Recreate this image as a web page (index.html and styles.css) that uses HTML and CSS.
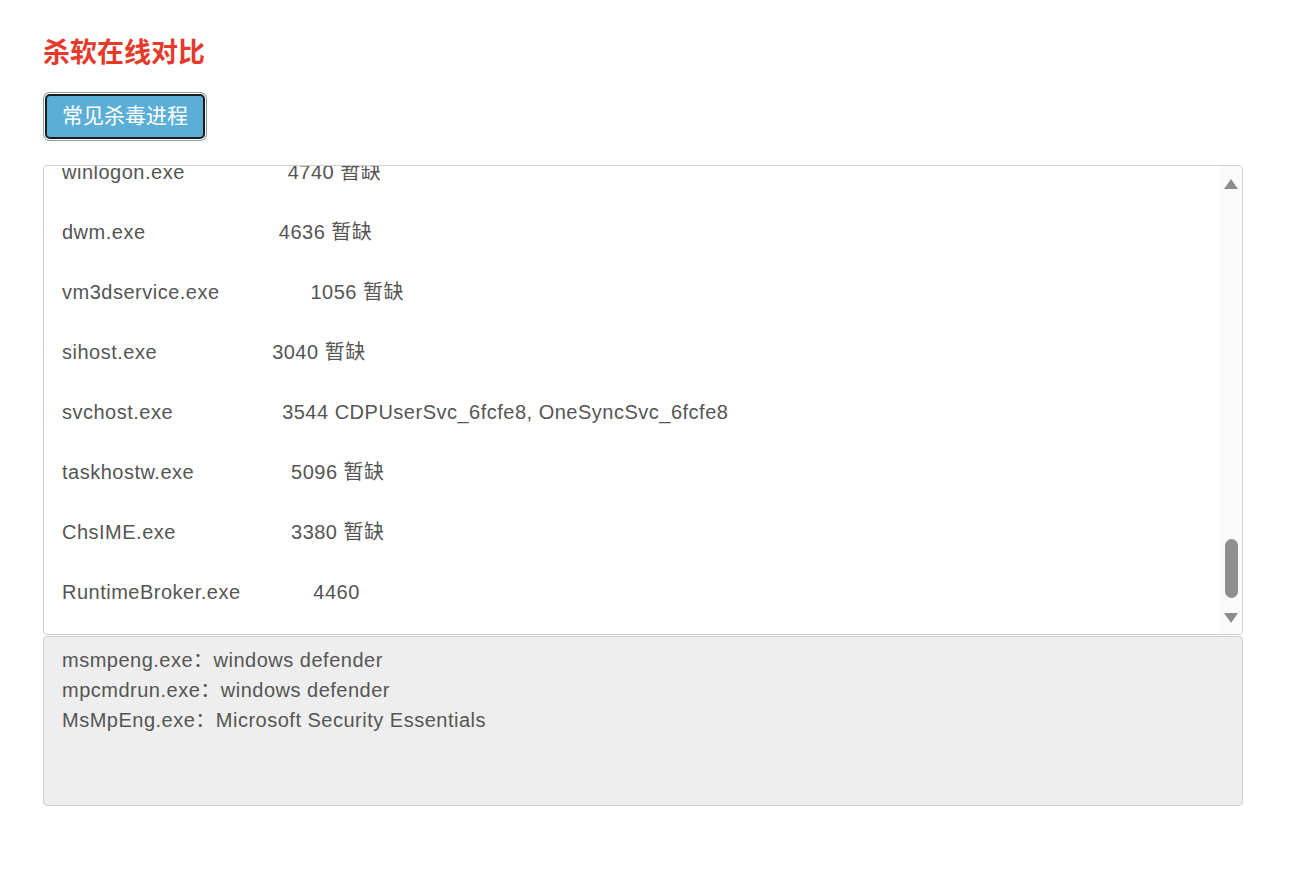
FILE: index.html
```html
<!DOCTYPE html>
<html lang="zh-CN">
<head>
<meta charset="utf-8">
<title>杀软在线对比</title>
<link rel="stylesheet" href="styles.css">
</head>
<body>
<div class="page">
  <h3 class="title">杀软在线对比</h3>
  <button class="btn" type="button">常见杀毒进程</button>
  <div class="listbox">
    <div class="list-content">
      <div class="list-inner">
<div class="row">winlogon.exe                 4740 暂缺</div>
<div class="row">dwm.exe                      4636 暂缺</div>
<div class="row">vm3dservice.exe               1056 暂缺</div>
<div class="row">sihost.exe                   3040 暂缺</div>
<div class="row">svchost.exe                  3544 CDPUserSvc_6fcfe8, OneSyncSvc_6fcfe8</div>
<div class="row">taskhostw.exe                5096 暂缺</div>
<div class="row">ChsIME.exe                   3380 暂缺</div>
<div class="row">RuntimeBroker.exe            4460</div>
      </div>
    </div>
    <div class="scrollbar">
      <svg class="arrow" width="14" height="10" viewBox="0 0 14 10"><path d="M7 0 L14 10 L0 10 Z" fill="#8c8c8c"/></svg>
      <div class="track"><div class="thumb"></div></div>
      <svg class="arrow" width="14" height="10" viewBox="0 0 14 10"><path d="M0 0 L14 0 L7 10 Z" fill="#8c8c8c"/></svg>
    </div>
  </div>
  <div class="notes">
    <div>msmpeng.exe：windows defender</div>
    <div>mpcmdrun.exe：windows defender</div>
    <div>MsMpEng.exe：Microsoft Security Essentials</div>
  </div>
</div>
</body>
</html>
```

FILE: styles.css
```css
html, body {
  margin: 0;
  padding: 0;
  background: #fff;
}

.page {
  width: 1200px;
  padding: 35px 0 0 43px;
  font-family: "Liberation Sans", "Noto Sans CJK SC", sans-serif;
}

.title {
  margin: 0 0 23px 0;
  font-size: 27px;
  line-height: 36px;
  font-weight: bold;
  color: #e5392a;
  font-family: "Liberation Sans", "Noto Sans CJK SC", sans-serif;
}

.btn {
  display: block;
  margin: 0 0 26px 2px;
  width: 160px;
  height: 45px;
  padding: 0 0 1px 0;
  border: 2px solid #1c1c1c;
  border-radius: 5px;
  background: #5bafd6;
  color: #fff;
  font-size: 21px;
  line-height: 26px;
  font-family: "Liberation Sans", "Noto Sans CJK SC", sans-serif;
  box-shadow: 0 0 0 1px #ffffff, 0 0 0 2px #7f9db5;
  cursor: pointer;
}

.listbox {
  display: flex;
  height: 470px;
  box-sizing: border-box;
  border: 1px solid #cfcfcf;
  border-radius: 4px;
  background: #fff;
  overflow: hidden;
}

.list-content {
  flex: 1;
  overflow: hidden;
  padding-left: 18px;
  color: #555;
  font-size: 20px;
  line-height: 30px;
  letter-spacing: 0.5px;
}

.list-inner {
  margin-top: -9px;
}

.row {
  white-space: pre;
  height: 30px;
  margin-bottom: 30px;
}

.scrollbar {
  width: 22px;
  background: #fafafa;
  display: flex;
  flex-direction: column;
  align-items: center;
  padding: 13px 0 11px 0;
  box-sizing: border-box;
}

.arrow {
  display: block;
  flex: none;
}

.track {
  flex: 1;
  display: flex;
  flex-direction: column;
  justify-content: flex-end;
  padding-bottom: 15px;
}

.thumb {
  width: 13px;
  height: 59px;
  border-radius: 7px;
  background: #8f8f8f;
}

.notes {
  margin-top: 1px;
  height: 170px;
  box-sizing: border-box;
  border: 1px solid #cfcfcf;
  border-radius: 4px;
  background: #eeeeee;
  padding: 8px 18px;
  color: #555;
  font-size: 20px;
  line-height: 30px;
  letter-spacing: 0.5px;
}
```
